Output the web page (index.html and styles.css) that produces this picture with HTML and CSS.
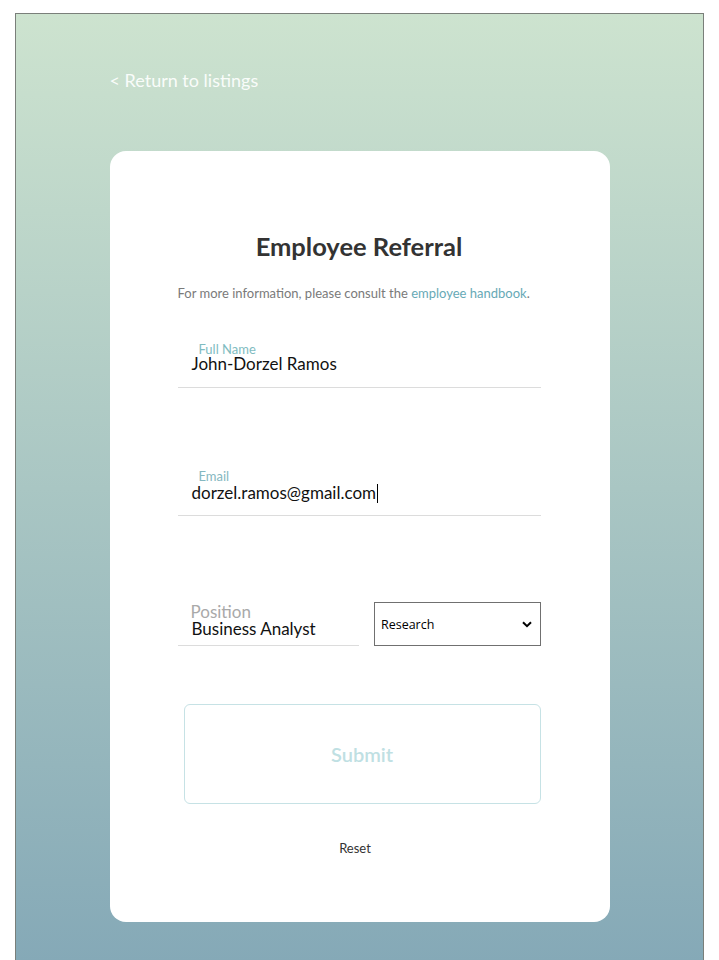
FILE: index.html
```html
<!DOCTYPE html>
<html lang="en">
<head>
<meta charset="utf-8">
<title>Employee Referral</title>
<link rel="stylesheet" href="styles.css">
</head>
<body>
<div class="frame">
  <div class="wrap">
    <a class="back" href="#">&lt; Return to listings</a>
    <form class="card">
      <h1 class="title">Employee Referral</h1>
      <p class="info">For more information, please consult the <a href="#" class="info-link">employee handbook</a>.</p>

      <div class="field field-name">
        <div class="field-label">Full Name</div>
        <div class="field-value">John-Dorzel Ramos</div>
      </div>

      <div class="field field-email">
        <div class="field-label field-label-email">Email</div>
        <div class="field-value">dorzel.ramos@gmail.com<span class="caret"></span></div>
      </div>

      <div class="row">
        <div class="position">
          <div class="position-label">Position</div>
          <div class="position-value">Business Analyst</div>
        </div>
        <div class="select">
          <span class="select-text">Research</span>
          <svg class="chevron" width="10" height="7" viewBox="0 0 10 7"><path d="M1 1.2 L5 5.2 L9 1.2" fill="none" stroke="#000" stroke-width="2"/></svg>
        </div>
      </div>

      <button type="button" class="submit">Submit</button>
      <div class="reset">Reset</div>
    </form>
  </div>
</div>
</body>
</html>
```

FILE: styles.css
```css
* { box-sizing: border-box; }
html, body { margin: 0; padding: 0; background: #fff; }
body { font-family: Lato, "Open Sans", sans-serif; }

.frame {
  margin: 13px 15px 0 15px;
  border: 1px solid #7a7f7a;
  border-bottom: none;
  min-height: 947px;
  background: linear-gradient(to bottom, #cde3cf 0%, #a9c6c3 50%, #85a9b7 100%);
  overflow: hidden;
}

.wrap {
  width: 500px;
  margin: 0 auto;
  padding-top: 55px;
  padding-bottom: 40px;
}

.back {
  display: block;
  font-size: 18px;
  line-height: 22px;
  color: rgba(255, 255, 255, 0.92);
  text-decoration: none;
}

.card {
  margin-top: 60px;
  background: #fff;
  border-radius: 16px;
  padding: 81px 69px 66px 68px;
  display: flex;
  flex-direction: column;
}

.title {
  margin: 0;
  font-size: 25.5px;
  line-height: 29px;
  font-weight: 700;
  color: #333;
  text-align: center;
}

.info {
  margin: 24px 0 0 0;
  font-size: 13px;
  line-height: 16px;
  color: #7a7a7a;
}
.info-link { color: #67a9b6; text-decoration: none; }

.field {
  border-bottom: 1px solid #dcdcdc;
}
.field-name { margin-top: 42px; }
.field-email { margin-top: 82px; }

.field-label {
  font-size: 13px;
  line-height: 12px;
  padding-left: 21px;
  color: #7fbcc1;
}
.field-label-email { margin-bottom: 2px; color: #84b7c0; }

.field-value {
  font-size: 17px;
  line-height: 18px;
  padding-left: 14px;
  padding-bottom: 14px;
  color: #111;
}
.field-email .field-value { padding-bottom: 12px; }

.caret {
  display: inline-block;
  width: 1px;
  height: 19px;
  background: #000;
  vertical-align: -4px;
  margin-left: 1px;
}

.row {
  margin-top: 86px;
  display: flex;
  align-items: flex-end;
  gap: 15px;
}

.position {
  width: 182px;
  border-bottom: 1px solid #dcdcdc;
  padding-bottom: 7px;
}
.position-label {
  font-size: 17px;
  line-height: 16px;
  padding-left: 13px;
  color: #a9a9a9;
}
.position-value {
  font-size: 17px;
  line-height: 18px;
  padding-left: 14px;
  color: #111;
}

.select {
  width: 167px;
  height: 44px;
  border: 1px solid #707070;
  display: flex;
  align-items: center;
  justify-content: space-between;
  padding: 0 8px 0 6px;
  background: #fff;
}
.select-text {
  font-family: "Open Sans", "Noto Sans", sans-serif;
  font-size: 12.5px;
  color: #000;
}
.chevron { display: block; }

.submit {
  margin: 58px 0 0 6px;
  width: 357px;
  height: 100px;
  background: #fff;
  border: 1px solid #c6e2e5;
  border-radius: 6px;
  font-family: Lato, "Open Sans", sans-serif;
  font-size: 20px;
  font-weight: 600;
  color: #bfe0e3;
  padding: 0;
}

.reset {
  margin-top: 36px;
  font-size: 13px;
  line-height: 16px;
  color: #333;
  text-align: center;
  padding-right: 8px;
}
```
